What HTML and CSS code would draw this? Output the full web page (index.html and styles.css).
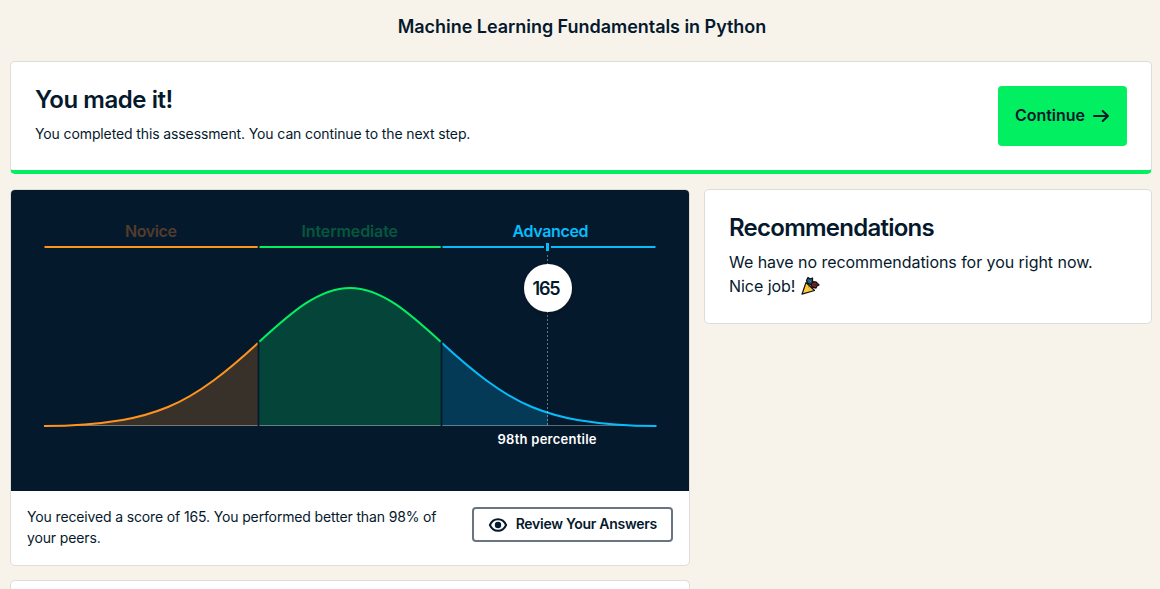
FILE: index.html
```html
<!DOCTYPE html>
<html lang="en">
<head>
<meta charset="utf-8">
<title>Machine Learning Fundamentals in Python</title>
<link rel="stylesheet" href="styles.css">
</head>
<body>
<main class="page">
  <h1 class="page-title"><span>Machine Learning Fundamentals in Python</span></h1>
  <section class="card banner">
    <div class="banner-copy">
      <h2 class="heading heading-banner"><span>You made it!</span></h2>
      <p class="banner-text"><span>You completed this assessment. You can continue to the next step.</span></p>
    </div>
    <button class="continue"><span class="continue-label">Continue</span>
      <svg class="arrow" width="18" height="14" viewBox="0 0 18 14" fill="none" stroke="#05192d" stroke-width="2" stroke-linecap="round" stroke-linejoin="round"><path d="M2 7h14M10.700 2l5.300 5-5.300 5"/></svg>
    </button>
  </section>
  <div class="columns">
    <div class="column-main">
      <section class="card result">
        <svg class="chart" width="678" height="301" viewBox="11 190 678 301">
          <defs>
            <clipPath id="scored"><rect x="442" y="260" width="106" height="166"/></clipPath>
            <filter id="shade" x="-30%" y="-30%" width="160%" height="160%"><feDropShadow dx="0" dy="2" stdDeviation="3" flood-color="#000" flood-opacity=".3"/></filter>
          </defs>
          <g class="level">
            <text x="125" y="237" textLength="52" fill="#533b2c">Novice</text>
            <text x="301.500" y="237" textLength="96.500" fill="#04583c">Intermediate</text>
            <text x="512.500" y="237" textLength="76" fill="#06bdfc">Advanced</text>
          </g>
          <path d="M44.500 247H257.700" stroke="#ff931e" stroke-width="2"/>
          <path d="M259.500 247H440.700" stroke="#03ef62" stroke-width="2"/>
          <path d="M442.500 247H544M551 247H655.500" stroke="#06bdfc" stroke-width="2"/>
          <rect x="546" y="243" width="3" height="8" fill="#06bdfc"/>
          <path d="M44 426C70.200 425.900 96.300 424.200 122.500 419.900C137.700 417.400 152.800 413.200 168 407C183.200 400.800 198.300 391.700 213.500 380.500C228.300 369.600 243.200 356.600 258 343V426Z" fill="#38312a"/>
          <path d="M259 342C274.200 328.100 289.300 314.300 304.500 304.200C319.700 294.100 334.800 288 350 288C365.200 288 380.300 294.100 395.500 304.200C410.700 314.300 425.800 328.100 441 342V426H259Z" fill="#054438"/>
          <path clip-path="url(#scored)" d="M442 343C456.800 356.600 471.700 369.600 486.500 380.500C501.700 391.700 516.800 400.800 532 407C547.200 413.200 562.300 417.400 577.500 419.900C603.700 424.200 629.800 425.900 656 426H442Z" fill="#053a56"/>
          <path d="M44 425.500H656" stroke="#fff" stroke-opacity=".35"/>
          <g fill="none" stroke-width="2">
            <path stroke="#ff931e" d="M44 426C70.200 425.900 96.300 424.200 122.500 419.900C137.700 417.400 152.800 413.200 168 407C183.200 400.800 198.300 391.700 213.500 380.500C228.300 369.600 243.200 356.600 258 343"/>
            <path stroke="#03ef62" d="M259 342C274.200 328.100 289.300 314.300 304.500 304.200C319.700 294.100 334.800 288 350 288C365.200 288 380.300 294.100 395.500 304.200C410.700 314.300 425.800 328.100 441 342"/>
            <path stroke="#06bdfc" d="M442 343C456.800 356.600 471.700 369.600 486.500 380.500C501.700 391.700 516.800 400.800 532 407C547.200 413.200 562.300 417.400 577.500 419.900C603.700 424.200 629.800 425.900 656.500 426"/>
          </g>
          <path d="M258.500 341V426M441.500 341V426" stroke="#05192d" stroke-width="1.800"/>
          <path d="M547.500 255V425" stroke="#fff" stroke-opacity=".4" stroke-dasharray="2 2"/>
          <circle cx="548" cy="288" r="24" fill="#fff" filter="url(#shade)"/>
          <text class="score" x="532.500" y="295" textLength="28">165</text>
          <text class="percentile" x="497.500" y="444" textLength="99">98th percentile</text>
        </svg>
        <div class="result-footer">
          <p class="result-text"><span class="line-one">You received a score of 165. You performed better than 98% of</span><br><span class="line-two">your peers.</span></p>
          <button class="review">
            <svg width="20" height="16" viewBox="0 0 20 16"><path d="M1.900 8C3.500 4.400 6.300 2.200 10 2.200S16.500 4.400 18.100 8C16.500 11.600 13.700 13.800 10 13.800S3.500 11.600 1.900 8Z" fill="none" stroke="#05192d" stroke-width="2" stroke-linejoin="round"/><circle cx="10" cy="8" r="3.200" fill="#05192d"/></svg>
            <span class="review-label">Review Your Answers</span>
          </button>
        </div>
      </section>
      <section class="card next"></section>
    </div>
    <aside class="card recs">
      <h2 class="heading heading-recs"><span>Recommendations</span></h2>
      <p class="recs-text"><span class="recs-one">We have no recommendations for you right now.</span><br><span class="recs-two">Nice job!</span>
        <svg class="party" width="20" height="20" viewBox="0 0 20 20" stroke="#111" stroke-linejoin="round"><path d="M2 18.200L6 6.500L14.500 14.500Z" fill="#ffc83d" stroke-width="1.200"/><path d="M6.500 4.500L8 1.500L10 3L12.500 2L12.500 5L14 7L11 9L7.500 7Z" fill="#1d6380" stroke-width="1.300"/><path d="M11 8L13 6L16 6L19 9L17 10L16 12L12 11Z" fill="#8a2520" stroke-width="1.300"/><path d="M9 4l2 2" stroke="#2589a8"/><path d="M13 8.500l4 .5" stroke="#30202a"/><path d="M8 11h1" stroke="#f03a35" stroke-width=".8"/><path d="M9 13h1" stroke="#5bc0de" stroke-width=".8"/></svg>
      </p>
    </aside>
  </div>
</main>
</body>
</html>
```
FILE: styles.css
```css
* { box-sizing: border-box; margin: 0; padding: 0; }
body { height: 589px; background: #f7f3eb; color: #05192d; font-family: Inter, "Liberation Sans", sans-serif; }
.page { padding: 0 8px 0 10px; }
.page-title { height: 61px; padding: 15px 0 0 2px; text-align: center; font-size: 18px; line-height: 24px; font-weight: 600; letter-spacing: -.04px; }
.card { background: #fff; border: 1px solid #dfddd6; border-radius: 5px; overflow: hidden; }
.banner { height: 113px; display: flex; justify-content: space-between; align-items: flex-start; padding: 24px 24px 0 24px; border-bottom: 4px solid #03ef62; }
.heading { font-size: 24px; line-height: 28px; font-weight: 600; white-space: nowrap; }
.heading-banner { letter-spacing: -.45px; }
.heading-recs { letter-spacing: -.75px; }
.banner-text { margin-top: 9px; font-size: 14px; line-height: 21px; letter-spacing: -.115px; white-space: nowrap; }
.continue { width: 129px; height: 60px; border: 0; border-radius: 4px; background: #03ef62; color: #05192d; display: flex; align-items: center; justify-content: space-between; padding: 0 17px; font: 600 16px/24px Inter, sans-serif; letter-spacing: -.05px; }
.continue-label { padding-bottom: 2px; }
.columns { display: flex; gap: 14px; align-items: flex-start; margin-top: 15px; }
.column-main { width: 680px; display: flex; flex-direction: column; gap: 14px; }
.result { height: 377px; }
.chart { display: block; background: #05192d; }
.level { font-size: 16px; font-weight: 600; }
.score { font-size: 18px; font-weight: 600; fill: #05192d; }
.percentile { font-size: 13px; font-weight: 600; fill: #fff; }
.result-footer { display: flex; justify-content: space-between; align-items: flex-start; padding: 15px 16px; }
.result-text { font-size: 14px; line-height: 21px; letter-spacing: -.14px; white-space: nowrap; }
.review { width: 201px; height: 35px; margin-top: 1px; display: flex; align-items: center; justify-content: space-between; padding: 0 14px; background: #fff; border: 2px solid #697582; border-radius: 4px; color: #05192d; font: 600 14px/21px Inter, sans-serif; letter-spacing: -.27px; white-space: nowrap; }
.review-label { padding-bottom: 2px; }
.next { height: 9px; border-bottom: 0; border-radius: 5px 5px 0 0; }
.recs { flex: 1; height: 135px; padding: 24px; }
.recs-text { margin-top: 8px; font-size: 16px; line-height: 24px; letter-spacing: -.05px; white-space: nowrap; }
.party { vertical-align: -4px; }
```
